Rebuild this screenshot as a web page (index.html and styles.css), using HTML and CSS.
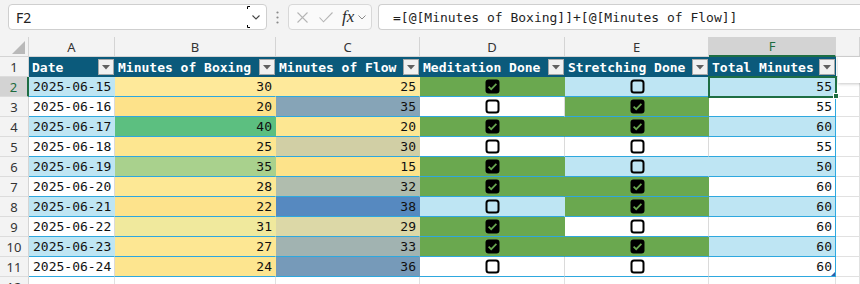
FILE: index.html
```html
<!DOCTYPE html>
<html lang="en">
<head>
  <meta charset="UTF-8" />
  <title>Workout log</title>
  <link rel="stylesheet" href="styles.css">
</head>
<body>

  <svg class="defs" width="0" height="0">
    <symbol id="cb-on" viewBox="0 0 15 15">
      <rect x="0.5" y="0.5" width="14" height="14" rx="3" fill="#000"/>
      <path d="M3.6 7.6 L6.2 10.2 L11.4 4.8" fill="none" stroke="#6aa84f" stroke-width="1.7"/>
    </symbol>
    <symbol id="cb-off" viewBox="0 0 15 15">
      <rect x="1.5" y="1.5" width="12" height="12" rx="2.5" fill="none" stroke="#000" stroke-width="2"/>
    </symbol>
    <symbol id="tri" viewBox="0 0 8 5">
      <path d="M0 0 H8 L4 4.5 Z" fill="#606060"/>
    </symbol>
  </svg>

  <div class="formula-bar">
    <div class="name-box">
      <span>F2</span>
      <svg class="nb-drop" width="19" height="24" viewBox="0 0 19 24">
        <path d="M0.5 4 V1.5 H3" fill="none" stroke="#000" stroke-width="1"/>
        <path d="M0.5 20 V22.5 H3" fill="none" stroke="#000" stroke-width="1"/>
        <path d="M5.5 10.5 L9 14 L12.5 10.5" fill="none" stroke="#444" stroke-width="1.1"/>
      </svg>
    </div>
    <div class="grip">
      <svg width="3" height="13" viewBox="0 0 3 13">
        <circle cx="1.5" cy="1.5" r="1.1" fill="#8a8a8a"/>
        <circle cx="1.5" cy="6.5" r="1.1" fill="#8a8a8a"/>
        <circle cx="1.5" cy="11.5" r="1.1" fill="#8a8a8a"/>
      </svg>
    </div>
    <div class="fx-tools">
      <svg class="t-x" width="11" height="11" viewBox="0 0 11 11">
        <path d="M0.5 0.5 L10.5 10.5 M10.5 0.5 L0.5 10.5" stroke="#b5b5b5" stroke-width="1.1"/>
      </svg>
      <svg class="t-ok" width="14" height="11" viewBox="0 0 14 11">
        <path d="M0.5 5.5 L4.5 9.8 L13.5 0.5" fill="none" stroke="#b5b5b5" stroke-width="1.1"/>
      </svg>
      <span class="fx">fx</span>
      <svg class="t-dd" width="8" height="5" viewBox="0 0 8 5">
        <path d="M0.5 0.5 L4 4 L7.5 0.5" fill="none" stroke="#8a8a8a" stroke-width="1"/>
      </svg>
    </div>
    <div class="formula">=[@[Minutes of Boxing]]+[@[Minutes of Flow]]</div>
  </div>

  <div class="sheet">
    <!-- column letters -->
    <div class="corner"><i></i></div>
    <div class="ch">A</div>
    <div class="ch">B</div>
    <div class="ch">C</div>
    <div class="ch">D</div>
    <div class="ch">E</div>
    <div class="ch active">F</div>
    <div class="ch"></div>

    <!-- table header -->
    <div class="rh">1</div>
    <div class="th"><span>Date</span><b class="fbtn"><svg><use href="#tri"/></svg></b></div>
    <div class="th"><span>Minutes of Boxing</span><b class="fbtn"><svg><use href="#tri"/></svg></b></div>
    <div class="th"><span>Minutes of Flow</span><b class="fbtn"><svg><use href="#tri"/></svg></b></div>
    <div class="th"><span>Meditation Done</span><b class="fbtn"><svg><use href="#tri"/></svg></b></div>
    <div class="th"><span>Stretching Done</span><b class="fbtn"><svg><use href="#tri"/></svg></b></div>
    <div class="th"><span>Total Minutes</span><b class="fbtn"><svg><use href="#tri"/></svg></b></div>
    <div class="g top"></div>

    <!-- row 2 -->
    <div class="rh active">2</div>
    <div class="c date band">2025-06-15</div>
    <div class="c num" style="background:#fee99a">30</div>
    <div class="c num" style="background:#fee99b">25</div>
    <div class="c chk done"><svg><use href="#cb-on"/></svg></div>
    <div class="c chk band"><svg><use href="#cb-off"/></svg></div>
    <div class="c num band last selected">55<i class="handle"></i></div>
    <div class="g"></div>

    <!-- row 3 -->
    <div class="rh">3</div>
    <div class="c date w">2025-06-16</div>
    <div class="c num" style="background:#fde28a">20</div>
    <div class="c num" style="background:#86a4b7">35</div>
    <div class="c chk w"><svg><use href="#cb-off"/></svg></div>
    <div class="c chk done"><svg><use href="#cb-on"/></svg></div>
    <div class="c num w last">55</div>
    <div class="g"></div>

    <!-- row 4 -->
    <div class="rh">4</div>
    <div class="c date band">2025-06-17</div>
    <div class="c num" style="background:#5cbf80">40</div>
    <div class="c num" style="background:#fde792">20</div>
    <div class="c chk done"><svg><use href="#cb-on"/></svg></div>
    <div class="c chk done"><svg><use href="#cb-on"/></svg></div>
    <div class="c num band last">60</div>
    <div class="g"></div>

    <!-- row 5 -->
    <div class="rh">5</div>
    <div class="c date w">2025-06-18</div>
    <div class="c num" style="background:#fde690">25</div>
    <div class="c num" style="background:#d1cfa5">30</div>
    <div class="c chk w"><svg><use href="#cb-off"/></svg></div>
    <div class="c chk w"><svg><use href="#cb-off"/></svg></div>
    <div class="c num w last">55</div>
    <div class="g"></div>

    <!-- row 6 -->
    <div class="rh">6</div>
    <div class="c date band">2025-06-19</div>
    <div class="c num" style="background:#a9d18d">35</div>
    <div class="c num" style="background:#fde38a">15</div>
    <div class="c chk done"><svg><use href="#cb-on"/></svg></div>
    <div class="c chk band"><svg><use href="#cb-off"/></svg></div>
    <div class="c num band last">50</div>
    <div class="g"></div>

    <!-- row 7 -->
    <div class="rh">7</div>
    <div class="c date w">2025-06-20</div>
    <div class="c num" style="background:#fde895">28</div>
    <div class="c num" style="background:#b0bdae">32</div>
    <div class="c chk done"><svg><use href="#cb-on"/></svg></div>
    <div class="c chk done"><svg><use href="#cb-on"/></svg></div>
    <div class="c num w last">60</div>
    <div class="g"></div>

    <!-- row 8 -->
    <div class="rh">8</div>
    <div class="c date band">2025-06-21</div>
    <div class="c num" style="background:#fde38c">22</div>
    <div class="c num" style="background:#5689c0">38</div>
    <div class="c chk band"><svg><use href="#cb-off"/></svg></div>
    <div class="c chk done"><svg><use href="#cb-on"/></svg></div>
    <div class="c num band last">60</div>
    <div class="g"></div>

    <!-- row 9 -->
    <div class="rh">9</div>
    <div class="c date w">2025-06-22</div>
    <div class="c num" style="background:#f0e99d">31</div>
    <div class="c num" style="background:#dcd8a7">29</div>
    <div class="c chk done"><svg><use href="#cb-on"/></svg></div>
    <div class="c chk w"><svg><use href="#cb-off"/></svg></div>
    <div class="c num w last">60</div>
    <div class="g"></div>

    <!-- row 10 -->
    <div class="rh">10</div>
    <div class="c date band">2025-06-23</div>
    <div class="c num" style="background:#fde793">27</div>
    <div class="c num" style="background:#a1b3b1">33</div>
    <div class="c chk done"><svg><use href="#cb-on"/></svg></div>
    <div class="c chk done"><svg><use href="#cb-on"/></svg></div>
    <div class="c num band last">60</div>
    <div class="g"></div>

    <!-- row 11 -->
    <div class="rh">11</div>
    <div class="c date w">2025-06-24</div>
    <div class="c num" style="background:#fde58f">24</div>
    <div class="c num" style="background:#769ab9">36</div>
    <div class="c chk w"><svg><use href="#cb-off"/></svg></div>
    <div class="c chk w"><svg><use href="#cb-off"/></svg></div>
    <div class="c num w last end">60</div>
    <div class="g"></div>

    <!-- row 12, cut by the window -->
    <div class="rh">12</div>
    <div class="g"></div>
    <div class="g"></div>
    <div class="g"></div>
    <div class="g"></div>
    <div class="g"></div>
    <div class="g"></div>
    <div class="g"></div>
  </div>

  <div class="peek"></div>

</body>
</html>
```

FILE: styles.css
```css
* {
  margin: 0;
  padding: 0;
  box-sizing: border-box;
}

body {
  width: 860px;
  height: 284px;
  overflow: hidden;
  position: relative;
  background: #f3f3f3;
  font-family: 'Noto Sans', 'Open Sans', sans-serif;
  color: #222;
}

.defs {
  position: absolute;
}

/* formula bar */

.formula-bar {
  display: flex;
  height: 37px;
  padding: 4px 0 7px 8px;
}

.name-box {
  width: 259px;
  display: flex;
  align-items: center;
  justify-content: space-between;
  background: #fff;
  border: 1px solid #cfcfcf;
  border-radius: 4px;
  padding-left: 7px;
  font-size: 14px;
}

.grip {
  width: 21px;
  display: flex;
  align-items: center;
  justify-content: center;
}

.fx-tools {
  width: 84px;
  display: flex;
  align-items: center;
  border: 1px solid #d8d8d8;
  border-radius: 4px;
  background: #fafafa;
  padding-left: 8px;
}

.t-ok {
  margin-left: 11px;
}

.fx {
  margin-left: 9px;
  font-family: 'Liberation Serif', serif;
  font-style: italic;
  font-size: 17px;
  color: #2b2b2b;
  line-height: 1;
  margin-top: -2px;
}

.t-dd {
  margin-left: 4px;
}

.formula {
  flex: 1;
  margin-left: 6px;
  display: flex;
  align-items: center;
  background: #fff;
  border: 1px solid #cfcfcf;
  border-right: none;
  border-radius: 4px 0 0 4px;
  padding-left: 14px;
  font-family: 'DejaVu Sans Mono', monospace;
  font-size: 13px;
  color: #1f1f1f;
}

/* grid */

.sheet {
  display: grid;
  grid-template-columns: 29px 86px 161px 144px 145px 144px 127px 24px;
  grid-auto-rows: 20px;
}

.corner {
  display: flex;
  align-items: flex-end;
  justify-content: flex-end;
  padding: 0 3px 2px 0;
  border-right: 1px solid #d4d4d4;
  border-bottom: 1px solid #d4d4d4;
}

.corner i {
  width: 13px;
  height: 13px;
  background: #b9b9b9;
  clip-path: polygon(100% 0, 100% 100%, 0 100%);
}

.ch {
  display: flex;
  align-items: center;
  justify-content: center;
  font-size: 13px;
  color: #333;
  border-right: 1px solid #d4d4d4;
  border-bottom: 1px solid #d4d4d4;
}

.ch.active {
  background: #d3d3d3;
  color: #1d6b40;
  border-bottom: 2px solid #1e6e43;
}

.rh {
  display: flex;
  align-items: center;
  justify-content: center;
  font-size: 13px;
  color: #333;
  border-right: 1px solid #d4d4d4;
  border-bottom: 1px solid #dcdcdc;
}

.rh.active {
  background: #d3d3d3;
  color: #1d6b40;
  border-right: 2px solid #1e6e43;
}

.th {
  display: flex;
  align-items: center;
  justify-content: space-between;
  padding: 0 1px 0 3px;
  background: #0b5a7b;
  color: #fff;
  font-family: 'DejaVu Sans Mono', monospace;
  font-weight: bold;
  font-size: 13px;
  white-space: nowrap;
}

.fbtn {
  width: 16px;
  height: 16px;
  display: flex;
  align-items: center;
  justify-content: center;
  background: #f1f1f1;
  border: 1px solid #a8a8a8;
}

.fbtn svg {
  width: 8px;
  height: 5px;
}

.c {
  display: flex;
  align-items: center;
  padding: 0 3px 0 4px;
  font-family: 'DejaVu Sans Mono', monospace;
  font-size: 13px;
  color: #111;
  white-space: nowrap;
  border-right: 1px solid transparent;
  border-bottom: 1px solid #2ea8df;
}

.c.date {
  padding: 0 0 0 4px;
}

.c.num {
  justify-content: flex-end;
}

.c.chk {
  justify-content: center;
}

.c.chk svg {
  width: 15px;
  height: 15px;
}

.band {
  background: #bee5f3;
}

.w {
  background: #fff;
  border-right-color: #dadada;
}

.done {
  background: #6aa84f;
}

.c.last {
  border-right: 1px solid #2ea8df;
}

.selected {
  position: relative;
  z-index: 1;
  outline: 2px solid #1e6e43;
  outline-offset: -1px;
}

.handle {
  position: absolute;
  right: -4px;
  bottom: -3px;
  width: 6px;
  height: 6px;
  background: #1e6e43;
  border: 1px solid #fff;
}

.end {
  position: relative;
}

.end::after {
  content: '';
  position: absolute;
  right: 0;
  bottom: 0;
  width: 4px;
  height: 4px;
  background: #2f5fa8;
  clip-path: polygon(100% 0, 100% 100%, 0 100%);
}

.g {
  background: #fff;
  border-right: 1px solid #e1e1e1;
  border-bottom: 1px solid #e1e1e1;
}

.peek {
  position: absolute;
  left: 838px;
  top: 57px;
  width: 30px;
  height: 26px;
  background: #fff;
  box-shadow: 0 1px 3px rgba(0, 0, 0, 0.22);
}
```
